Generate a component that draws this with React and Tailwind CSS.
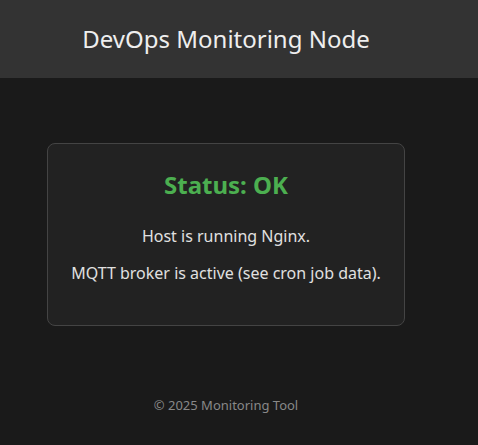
import React from 'react';

function App() {
  return (
    <div className="min-h-screen bg-[#1a1a1a] text-[#e0e0e0] font-['Noto_Sans',sans-serif]">
      {/* HEADER */}
      <header className="h-[78px] bg-[#333333] flex items-center">
        <div className="w-[452px] text-center -mt-px">
          <h1 className="text-[24px] leading-[30px] text-[#eeeeee]">DevOps Monitoring Node</h1>
        </div>
      </header>

      {/* STATUS CARD */}
      <main className="w-[452px] pt-[65px]">
        <div className="w-[358px] mx-auto bg-[#222222] border border-[#444444] rounded-lg px-5 pt-6 pb-[40px] text-center">
          <h2 className="text-[24px] leading-[34px] font-bold text-[#4caf50]">Status: OK</h2>
          <p className="mt-[22px] text-[16px] leading-[24px]">Host is running Nginx.</p>
          <p className="mt-[13px] text-[16px] leading-[24px] whitespace-nowrap">MQTT broker is active (see cron job data).</p>
        </div>
      </main>

      {/* FOOTER */}
      <footer className="w-[452px] pt-[69px] text-center">
        <p className="text-[13px] leading-[20px] text-[#888888]">© 2025 Monitoring Tool</p>
      </footer>
    </div>
  );
}

export default App;
